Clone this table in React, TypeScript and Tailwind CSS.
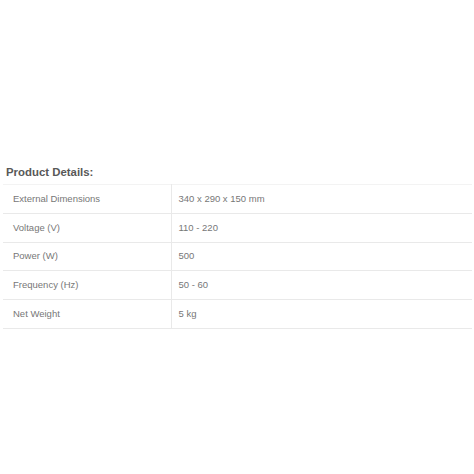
const rows = [
  ["External Dimensions", "340 x 290 x 150 mm"],
  ["Voltage (V)", "110 - 220"],
  ["Power (W)", "500"],
  ["Frequency (Hz)", "50 - 60"],
  ["Net Weight", "5 kg"],
];

export default function App() {
  return (
    <div className="w-[474px] h-[474px] bg-white font-['Liberation_Sans',Arial,sans-serif]">
      <div className="pt-[165px] pl-[3px] pr-[2px]">
        <h3 className="ml-[3px] text-[11.4px] font-bold text-[#585858] leading-[14px] mb-[5px]">
          Product Details:
        </h3>
        <table className="w-full border-collapse text-[9.5px] text-[#777] border-t border-[#f3f3f3]">
          <tbody>
            {rows.map(([k, v]) => (
              <tr key={k} className="h-[28.8px] border-b border-[#e9e9e9]">
                <td className="w-[168px] pl-[10px] border-r border-[#e9e9e9]">{k}</td>
                <td className="pl-[7px]">{v}</td>
              </tr>
            ))}
          </tbody>
        </table>
      </div>
    </div>
  );
}
